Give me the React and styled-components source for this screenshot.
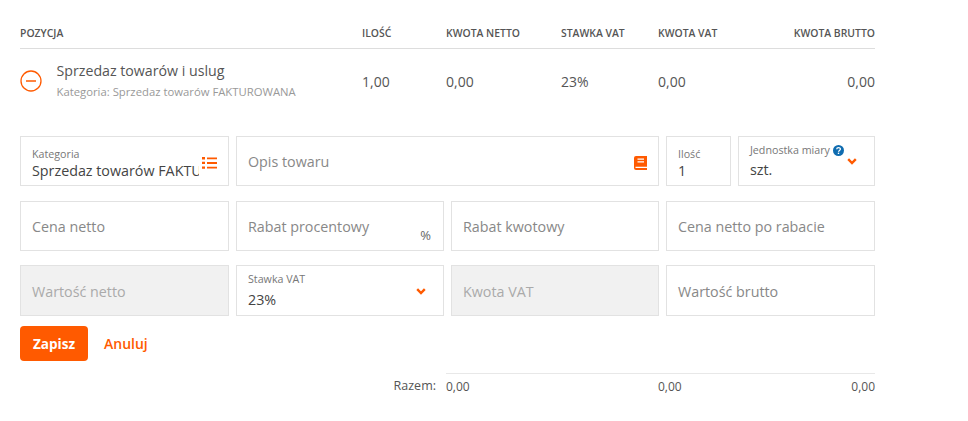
import styled, { createGlobalStyle } from "styled-components";

const GlobalStyle = createGlobalStyle`
  html, body {
    margin: 0;
    background: #fff;
    font-family: "Open Sans", sans-serif;
    color: #555;
  }
`;

const orange = "#ff5a00";
const tableColumns = "342px 84px 115px 97px 100px 117px";

const Page = styled.div`
  width: 855px;
  padding: 25px 0 0 20px;
`;

const TableHead = styled.div`
  display: grid;
  grid-template-columns: ${tableColumns};
  height: 23px;
  border-bottom: 1px solid #ddd;
`;

const HeadCell = styled.div`
  font-size: 10.4px;
  font-weight: 600;
  line-height: 16px;
  color: #555;
  text-align: ${props => (props.$right ? "right" : "left")};
`;

const TableRow = styled.div`
  display: grid;
  grid-template-columns: ${tableColumns};
  align-items: center;
  height: 64px;
  margin-bottom: 23px;
`;

const Position = styled.div`
  display: flex;
  align-items: center;
  gap: 14.5px;
`;

const RemoveButton = styled.svg`
  width: 22px;
  height: 22px;
  flex: none;
  display: block;
`;

const PositionName = styled.div`
  font-size: 14.2px;
  line-height: 20px;
  color: #555;
`;

const PositionCategory = styled.div`
  font-size: 11.3px;
  line-height: 18px;
  margin-top: 2px;
  color: #999;
`;

const Cell = styled.div`
  font-size: 14px;
  color: #555;
  text-align: ${props => (props.$right ? "right" : "left")};
`;

const Form = styled.div`
  display: grid;
  grid-template-columns: 209px 208px 208px 209px;
  grid-template-rows: 51px 50px 51px;
  align-items: start;
  column-gap: 7px;
  row-gap: 14px;
`;

const Split = styled.div`
  display: flex;
  gap: 7px;
`;

const Field = styled.div`
  position: relative;
  box-sizing: border-box;
  height: ${props => props.$height || 50}px;
  flex: ${props => props.$flex || "none"};
  width: ${props => (props.$width ? props.$width + "px" : "auto")};
  grid-column: ${props => (props.$wide ? "span 2" : "auto")};
  padding: ${props => props.$shift || 0}px 11px 0;
  border: 1px solid #e2e2e2;
  background: ${props => (props.$disabled ? "#f1f1f1" : "#fff")};
  display: flex;
  flex-direction: column;
  justify-content: center;
  overflow: hidden;
`;

const Placeholder = styled.div`
  font-size: 14.3px;
  line-height: 20px;
  margin-top: 2px;
  color: ${props => (props.$disabled ? "#aaa" : "#888")};
`;

const Label = styled.div`
  display: flex;
  align-items: center;
  gap: 3px;
  font-size: 10.7px;
  line-height: 14px;
  color: #777;
`;

const Value = styled.div`
  font-size: 14.3px;
  line-height: 19px;
  margin-top: ${props => props.$gap || 0}px;
  color: #444;
  white-space: nowrap;
  overflow: hidden;
  width: ${props => (props.$clip ? props.$clip + "px" : "auto")};
`;

const FieldIcon = styled.svg`
  position: absolute;
  display: block;
  right: ${props => props.$right}px;
  top: ${props => props.$top}px;
`;

const Percent = styled.span`
  position: absolute;
  right: 12px;
  bottom: 6px;
  font-size: 13px;
  color: #666;
`;

const Actions = styled.div`
  display: flex;
  align-items: center;
  gap: 16px;
  margin-top: 10px;
`;

const SaveButton = styled.button`
  width: 68px;
  height: 35px;
  padding: 0;
  border: 0;
  border-radius: 4px;
  background: ${orange};
  color: #fff;
  font-family: inherit;
  font-size: 13.6px;
  font-weight: 700;
`;

const CancelLink = styled.a`
  color: ${orange};
  font-size: 14px;
  font-weight: 600;
`;

const Summary = styled.div`
  display: flex;
  margin-top: 12px;
`;

const SummaryLabel = styled.div`
  width: 416px;
  padding-top: 4px;
  text-align: right;
  font-size: 12.5px;
  line-height: 18px;
  color: #555;
`;

const SummaryValues = styled.div`
  margin-left: 10px;
  flex: 1;
  display: grid;
  grid-template-columns: 212px 1fr 1fr;
  padding-top: 4px;
  border-top: 1px solid #e8e8e8;
  font-size: 12px;
  line-height: 18px;
  color: #555;
`;

const SummaryValue = styled.div`
  text-align: ${props => (props.$right ? "right" : "left")};
`;

const ChevronIcon = ({ right, top }) => (
  <FieldIcon $right={right} $top={top} width="10" height="7" viewBox="0 0 10 7">
    <path d="M1.2 1.2 5 5l3.8-3.8" fill="none" stroke={orange} strokeWidth="2.4" />
  </FieldIcon>
);

const App = () => {
  return (
    <Page>
      <GlobalStyle />
      <TableHead>
        <HeadCell>POZYCJA</HeadCell>
        <HeadCell>ILOŚĆ</HeadCell>
        <HeadCell>KWOTA NETTO</HeadCell>
        <HeadCell>STAWKA VAT</HeadCell>
        <HeadCell>KWOTA VAT</HeadCell>
        <HeadCell $right>KWOTA BRUTTO</HeadCell>
      </TableHead>
      <TableRow>
        <Position>
          <RemoveButton viewBox="0 0 22 22">
            <circle cx="11" cy="11" r="10" fill="none" stroke={orange} strokeWidth="1.3" />
            <path d="M6 11h10" stroke={orange} strokeWidth="1.5" />
          </RemoveButton>
          <div>
            <PositionName>Sprzedaz towarów i uslug</PositionName>
            <PositionCategory>Kategoria: Sprzedaz towarów FAKTUROWANA</PositionCategory>
          </div>
        </Position>
        <Cell>1,00</Cell>
        <Cell>0,00</Cell>
        <Cell>23%</Cell>
        <Cell>0,00</Cell>
        <Cell $right>0,00</Cell>
      </TableRow>
      <Form>
        <Field $shift={4}>
          <Label>Kategoria</Label>
          <Value $clip={167}>Sprzedaz towarów FAKTUROWANA</Value>
          <FieldIcon $right={11} $top={20} width="15" height="12" viewBox="0 0 15 12">
            <path d="M0 0h3v2.4H0zM0 4.7h3v2.4H0zM0 9.4h3v2.4H0z" fill={orange} />
            <path d="M5 .4h10v1.9H5zM5 5h10v1.9H5zM5 9.7h10v1.9H5z" fill={orange} />
          </FieldIcon>
        </Field>
        <Field $wide>
          <Placeholder>Opis towaru</Placeholder>
          <FieldIcon $right={11} $top={19} width="13" height="14" viewBox="0 0 13 14">
            <path d="M2 0h11v14H2a2 2 0 0 1-2-2V2a2 2 0 0 1 2-2z" fill={orange} />
            <path d="M3.5 2.5h6.5v1.2H3.5zM3.5 5.2h6.5v1.2H3.5zM1.5 10.8H13v1.2H1.5z" fill="#fff" />
          </FieldIcon>
        </Field>
        <Split>
          <Field $width={65} $shift={4}>
            <Label>Ilość</Label>
            <Value>1</Value>
          </Field>
          <Field $flex="1">
            <Label>
              Jednostka miary
              <svg width="11" height="11" viewBox="0 0 11 11">
                <circle cx="5.5" cy="5.5" r="5.5" fill="#0f6cb0" />
                <path d="M3.7 4.2c.1-2.2 3.7-2.2 3.7-.1 0 1.4-1.9 1.3-1.9 2.7" fill="none" stroke="#fff" strokeWidth="1.3" />
                <path d="M4.8 7.6h1.4v1.4H4.8z" fill="#fff" />
              </svg>
            </Label>
            <Value $gap={3}>szt.</Value>
            <ChevronIcon right={17} top={21} />
          </Field>
        </Split>

        <Field><Placeholder>Cena netto</Placeholder></Field>
        <Field>
          <Placeholder>Rabat procentowy</Placeholder>
          <Percent>%</Percent>
        </Field>
        <Field><Placeholder>Rabat kwotowy</Placeholder></Field>
        <Field><Placeholder>Cena netto po rabacie</Placeholder></Field>

        <Field $height={51} $disabled><Placeholder $disabled>Wartość netto</Placeholder></Field>
        <Field $height={51}>
          <Label>Stawka VAT</Label>
          <Value $gap={4}>23%</Value>
          <ChevronIcon right={17} top={22} />
        </Field>
        <Field $height={51} $disabled><Placeholder $disabled>Kwota VAT</Placeholder></Field>
        <Field $height={51}><Placeholder>Wartość brutto</Placeholder></Field>
      </Form>
      <Actions>
        <SaveButton>Zapisz</SaveButton>
        <CancelLink>Anuluj</CancelLink>
      </Actions>
      <Summary>
        <SummaryLabel>Razem:</SummaryLabel>
        <SummaryValues>
          <SummaryValue>0,00</SummaryValue>
          <SummaryValue>0,00</SummaryValue>
          <SummaryValue $right>0,00</SummaryValue>
        </SummaryValues>
      </Summary>
    </Page>
  );
};

export default App;
